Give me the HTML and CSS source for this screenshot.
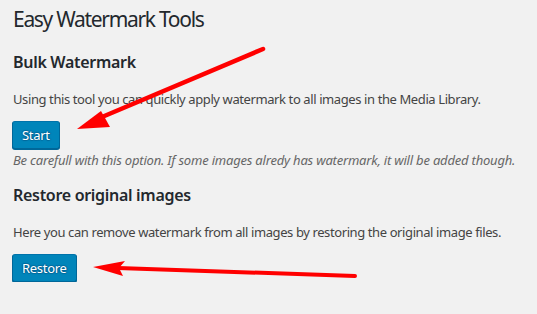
FILE: index.html
```html
<!DOCTYPE html>
<html lang="en">
<head>
    <meta charset="UTF-8">
    <meta name="viewport" content="width=device-width, initial-scale=1.0">
    <title>Easy Watermark Tools</title>
    <link rel="stylesheet" href="styles.css">
</head>
<body>
    <div class="wrap">
        <h1>Easy Watermark Tools</h1>

        <h2>Bulk Watermark</h2>
        <p>Using this tool you can quickly apply watermark to all images in the Media Library.</p>
        <button class="button-primary" type="button">Start</button>
        <p class="description">Be carefull with this option. If some images alredy has watermark, it will be added though.</p>

        <h2>Restore original images</h2>
        <p>Here you can remove watermark from all images by restoring the original image files.</p>
        <button class="button-primary" type="button">Restore</button>
    </div>

    <!-- annotation arrows drawn over the screenshot -->
    <svg class="arrows" width="537" height="314" viewBox="0 0 537 314">
        <line x1="263" y1="49" x2="102" y2="117" stroke="#ff0000" stroke-width="4.5" stroke-linecap="round"/>
        <polygon points="77,129 101,111 105,118 110,127" fill="#ff0000"/>
        <line x1="118" y1="268" x2="355" y2="276" stroke="#ff0000" stroke-width="4" stroke-linecap="round"/>
        <polygon points="93,267 125,261 119,268 123,276" fill="#ff0000"/>
    </svg>
</body>
</html>
```

FILE: styles.css
```css
body {
    margin: 0;
    background-color: #f1f1f1;
    color: #444;
    font-family: "Noto Sans", "Open Sans", sans-serif;
    font-size: 13px;
    position: relative;
    overflow: hidden;
}
.wrap {
    padding: 0 13px;
}
h1 {
    margin: 0;
    padding-top: 4px;
    font-size: 21px;
    font-weight: 400;
    line-height: 30px;
    letter-spacing: -1.3px;
    color: #23282d;
}
h2 {
    margin: 17px 0 0;
    font-size: 16px;
    font-weight: 600;
    line-height: 22px;
    letter-spacing: -0.3px;
    color: #23282d;
}
p {
    margin: 17px 0 0;
    line-height: 18px;
    letter-spacing: -0.4px;
    white-space: nowrap;
}
.description {
    margin-top: 2px;
    font-style: italic;
    color: #666;
    letter-spacing: -0.2px;
}
.description + h2 {
    margin-top: 15px;
}
.button-primary {
    display: block;
    margin: 13px 0 0 -1px;
    height: 28px;
    padding: 0 9px 1px;
    font-family: inherit;
    font-size: 13px;
    line-height: 26px;
    letter-spacing: -0.3px;
    color: #fff;
    background: #0085ba;
    border: 1px solid;
    border-color: #0073aa #006799 #006799;
    border-radius: 3px;
    box-shadow: 0 1px 0 #006799;
    text-shadow: 0 -1px 1px #006799, 1px 0 1px #006799, 0 1px 1px #006799, -1px 0 1px #006799;
    cursor: pointer;
}
.arrows {
    position: absolute;
    top: 0;
    left: 0;
    pointer-events: none;
}
```
